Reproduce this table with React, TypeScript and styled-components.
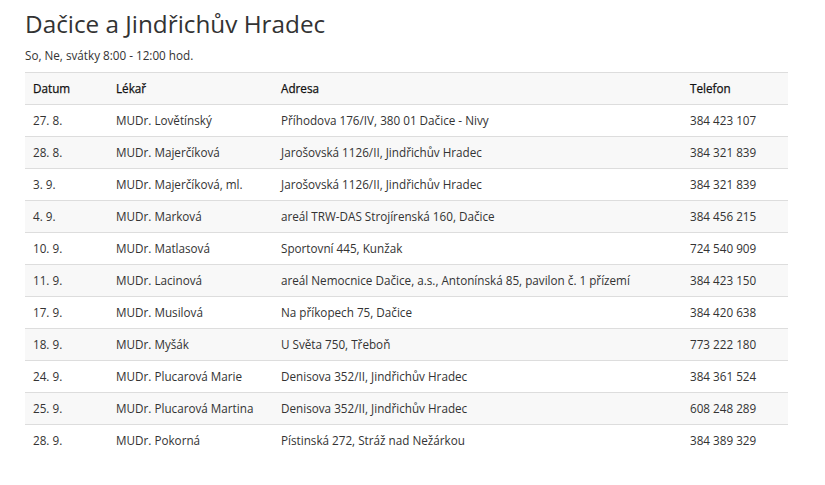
import styled, { createGlobalStyle } from "styled-components";

const GlobalStyle = createGlobalStyle`
  body {
    margin: 0;
    background: #fff;
    font-family: "Open Sans", "Liberation Sans", sans-serif;
    color: #333;
  }
`;

interface Duty {
  date: string;
  doctor: string;
  address: string;
  phone: string;
}

const duties: Duty[] = [
  { date: "27. 8.", doctor: "MUDr. Lovětínský", address: "Příhodova 176/IV, 380 01 Dačice - Nivy", phone: "384 423 107" },
  { date: "28. 8.", doctor: "MUDr. Majerčíková", address: "Jarošovská 1126/II, Jindřichův Hradec", phone: "384 321 839" },
  { date: "3. 9.", doctor: "MUDr. Majerčíková, ml.", address: "Jarošovská 1126/II, Jindřichův Hradec", phone: "384 321 839" },
  { date: "4. 9.", doctor: "MUDr. Marková", address: "areál TRW-DAS Strojírenská 160, Dačice", phone: "384 456 215" },
  { date: "10. 9.", doctor: "MUDr. Matlasová", address: "Sportovní 445, Kunžak", phone: "724 540 909" },
  { date: "11. 9.", doctor: "MUDr. Lacinová", address: "areál Nemocnice Dačice, a.s., Antonínská 85, pavilon č. 1 přízemí", phone: "384 423 150" },
  { date: "17. 9.", doctor: "MUDr. Musilová", address: "Na příkopech 75, Dačice", phone: "384 420 638" },
  { date: "18. 9.", doctor: "MUDr. Myšák", address: "U Světa 750, Třeboň", phone: "773 222 180" },
  { date: "24. 9.", doctor: "MUDr. Plucarová Marie", address: "Denisova 352/II, Jindřichův Hradec", phone: "384 361 524" },
  { date: "25. 9.", doctor: "MUDr. Plucarová Martina", address: "Denisova 352/II, Jindřichův Hradec", phone: "608 248 289" },
  { date: "28. 9.", doctor: "MUDr. Pokorná", address: "Pístinská 272, Stráž nad Nežárkou", phone: "384 389 329" },
];

export default function App() {
  return (
    <Page>
      <GlobalStyle />
      <Title>Dačice a Jindřichův Hradec</Title>
      <Hours>So, Ne, svátky 8:00 - 12:00 hod.</Hours>
      <Table>
        <colgroup>
          <col style={{ width: 83 }} />
          <col style={{ width: 165 }} />
          <col style={{ width: 409 }} />
          <col style={{ width: 106 }} />
        </colgroup>
        <thead>
          <HeadRow>
            <Th>Datum</Th>
            <Th>Lékař</Th>
            <Th>Adresa</Th>
            <Th>Telefon</Th>
          </HeadRow>
        </thead>
        <tbody>
          {duties.map((d, i) => (
            <Row key={i} $striped={i % 2 === 1}>
              <Td>{d.date}</Td>
              <Td>{d.doctor}</Td>
              <Td>{d.address}</Td>
              <Td>{d.phone}</Td>
            </Row>
          ))}
        </tbody>
      </Table>
    </Page>
  );
}

const Page = styled.div`
  padding: 9px 25px;
  width: 763px;
`;

const Title = styled.h1`
  margin: 0;
  font-size: 24.3px;
  line-height: 29px;
  font-weight: 400;
  color: #333;
`;

const Hours = styled.p`
  margin: 9px 0 8px;
  font-size: 11.7px;
  line-height: 17px;
  color: #333;
`;

const Table = styled.table`
  width: 763px;
  border-collapse: collapse;
  table-layout: fixed;
  font-size: 11.7px;
`;

const HeadRow = styled.tr`
  background: #f8f8f8;
`;

const Th = styled.th`
  text-align: left;
  font-weight: 400;
  color: #111;
  padding: 8px;
  line-height: 15px;
  border-top: 1px solid #ddd;
  border-bottom: 1px solid #ddd;
  -webkit-text-stroke: 0.25px #111;
`;

const Row = styled.tr<{ $striped: boolean }>`
  background: ${(p) => (p.$striped ? "#f8f8f8" : "#fff")};
`;

const Td = styled.td`
  padding: 8px;
  line-height: 15px;
  border-top: 1px solid #ddd;
  white-space: nowrap;
`;
